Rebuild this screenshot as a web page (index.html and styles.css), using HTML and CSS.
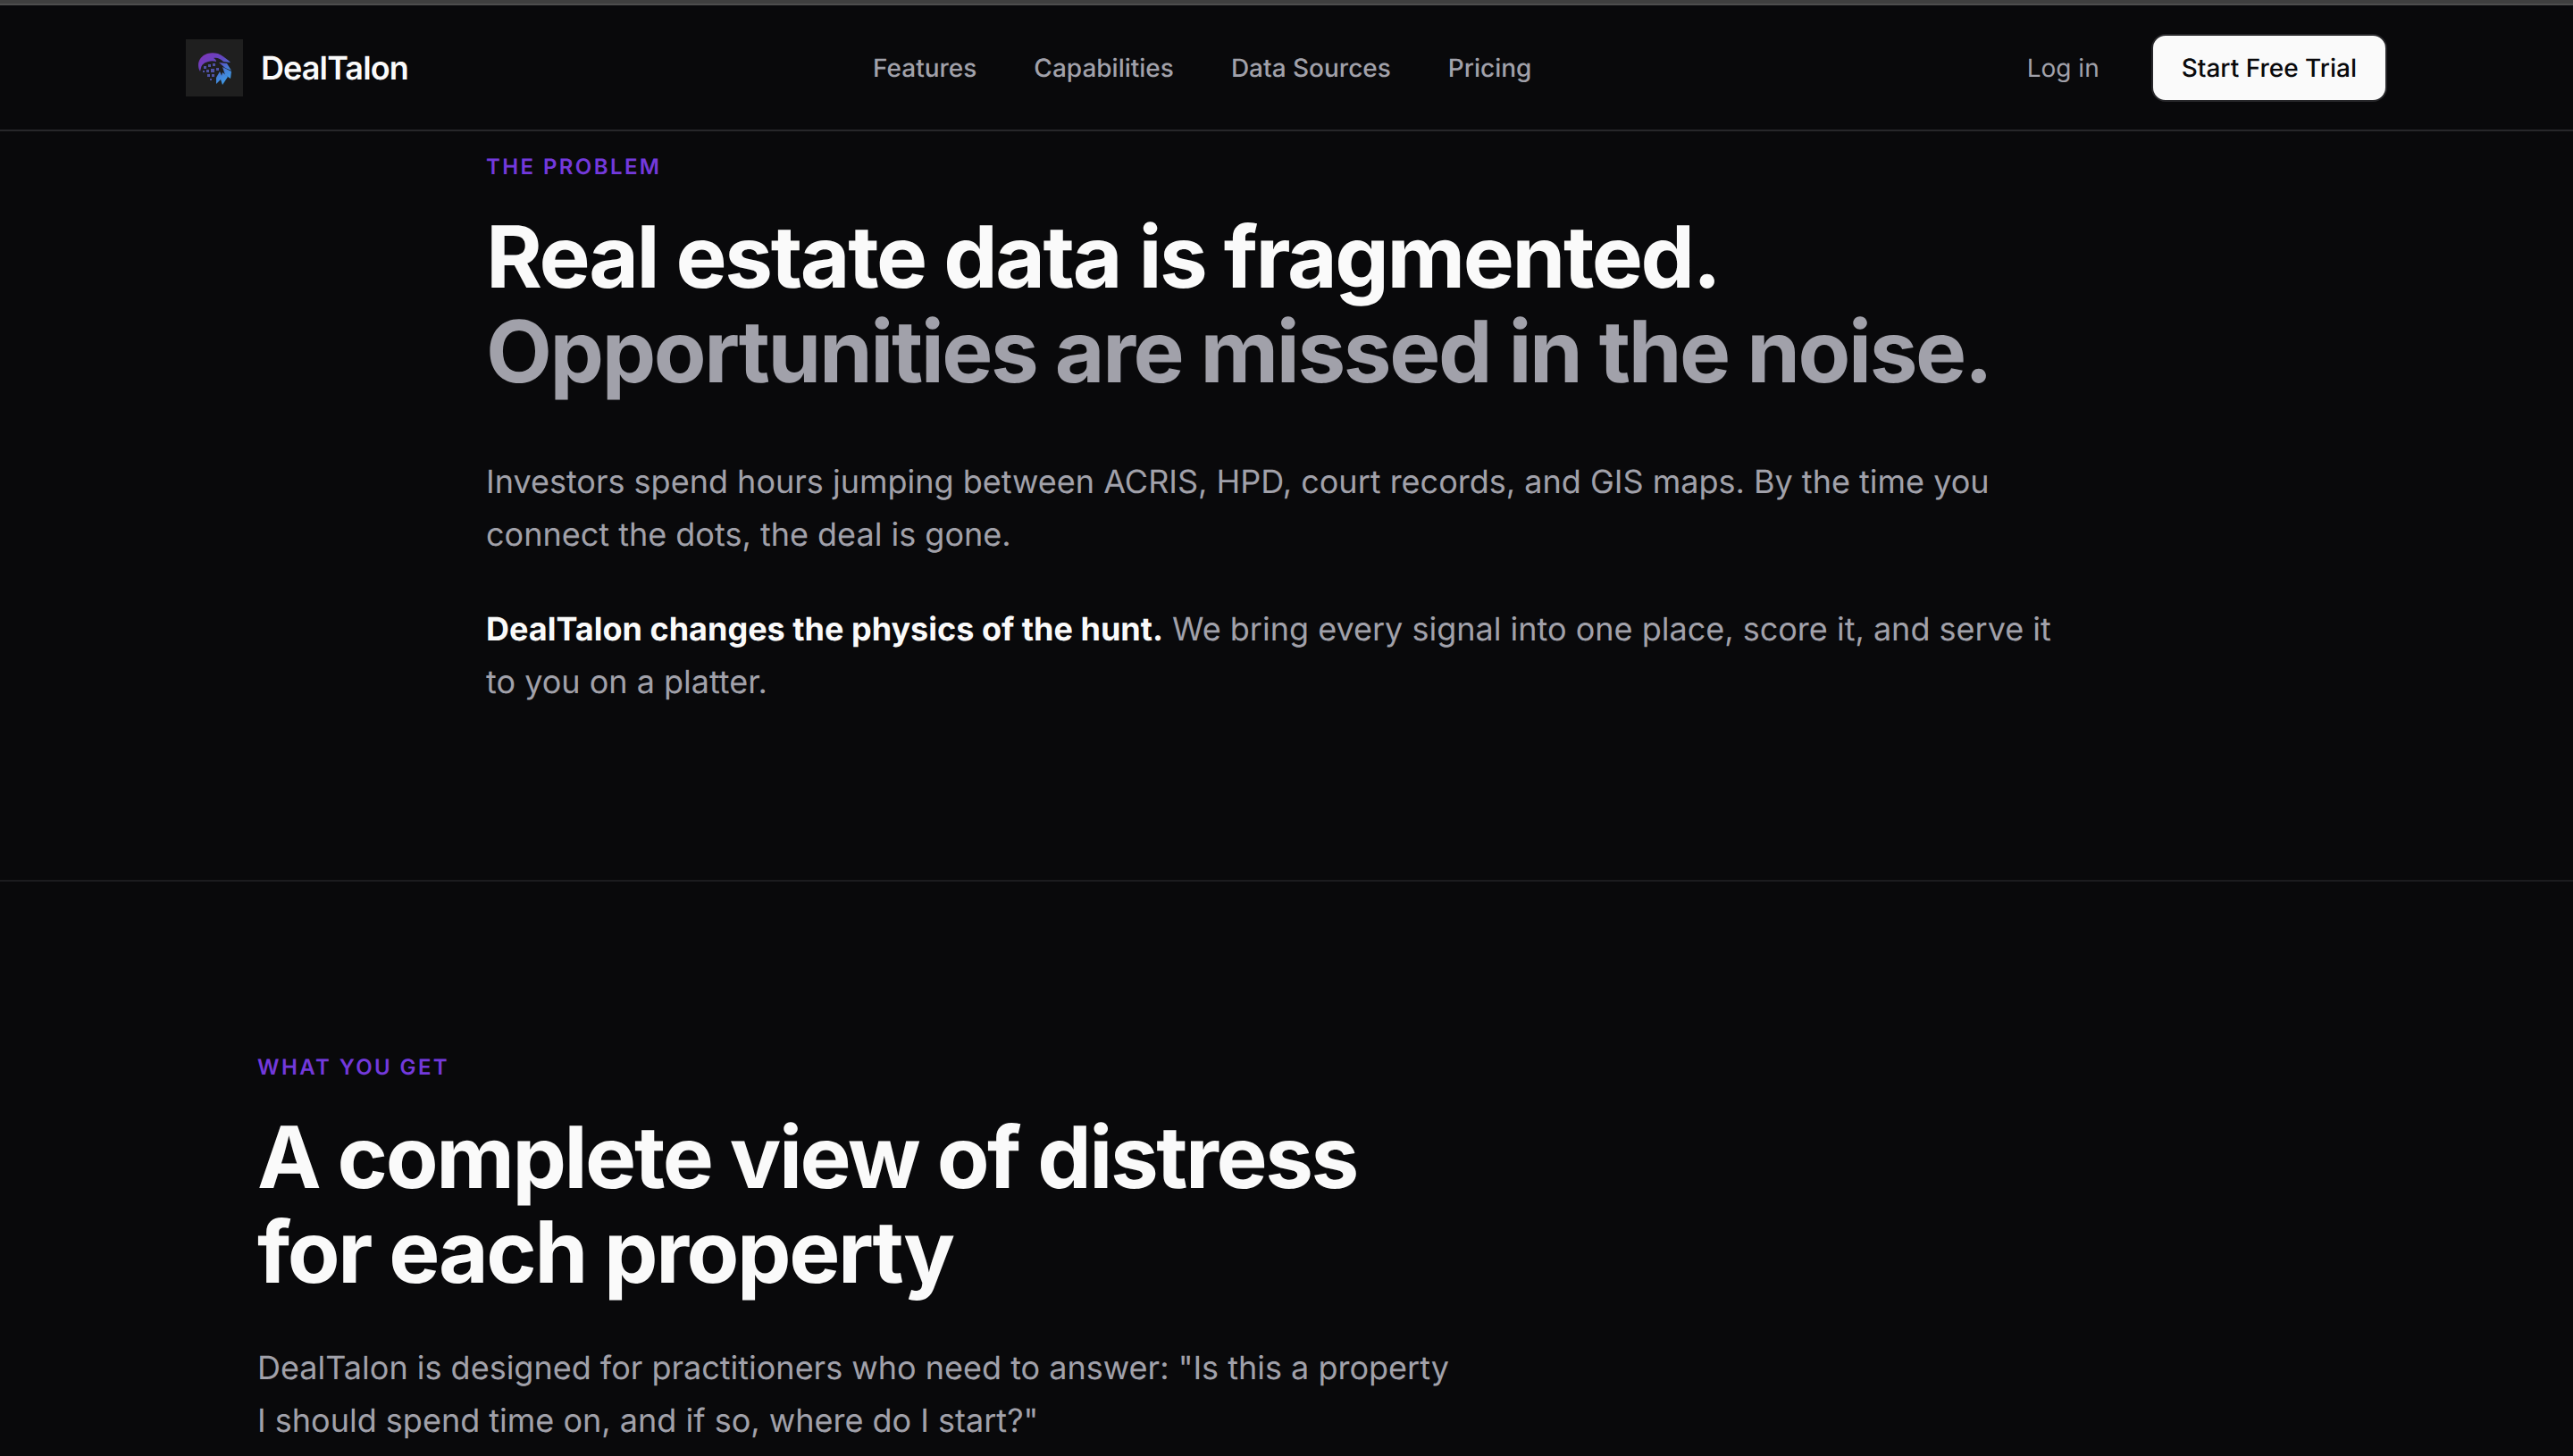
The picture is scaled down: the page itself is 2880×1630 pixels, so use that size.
FILE: index.html
```html
<!DOCTYPE html>
<html>
<head>
    <meta charset="UTF-8">
    <meta name="viewport" content="width=device-width, initial-scale=1.0">
    <title>DealTalon</title>
    <link rel="stylesheet" href="styles.css">
</head>
<body>
    <div class="top-strip"></div>

    <nav class="navbar">
        <a class="brand" href="#">
            <span class="brand-logo">
                <svg width="64" height="64" viewBox="0 0 64 64">
                    <defs>
                        <linearGradient id="talon" gradientUnits="userSpaceOnUse" x1="20" y1="16" x2="46" y2="50">
                            <stop offset="0" stop-color="#7d35b8"/>
                            <stop offset="0.4" stop-color="#6048c0"/>
                            <stop offset="0.7" stop-color="#4580d8"/>
                            <stop offset="1" stop-color="#3d9fe6"/>
                        </linearGradient>
                    </defs>
                    <g fill="url(#talon)">
                        <path d="M14 29c0-6 4-11 10-13 4-1 8-1 12 0 5 2 10 6 14 10l-8-1c-3-3-7-5-11-4 2 1 3 2 3 4-3-1-6-1-9 0-4 1-7 3-8 7l-1 4c-1-2-2-4-2-7z"/>
                        <path d="M37 26l9 1 5 8-7-3z"/>
                        <path d="M41 31l10 5-1 8-6-4z"/>
                        <path d="M41 37l6 5-6 9-2-6z"/>
                        <path d="M38 36l3 7-7 7 0-7z"/>
                    </g>
                    <g fill="#4f52a4">
                        <rect x="20" y="30" width="3" height="3"/>
                        <rect x="25" y="28" width="3" height="3"/>
                        <rect x="30" y="27" width="3" height="3"/>
                        <rect x="19" y="35" width="2" height="2"/>
                        <rect x="23" y="34" width="3" height="3"/>
                        <rect x="28" y="33" width="4" height="4"/>
                        <rect x="34" y="32" width="3" height="3"/>
                        <rect x="24" y="39" width="3" height="3"/>
                        <rect x="29" y="39" width="3" height="3"/>
                        <rect x="27" y="44" width="2" height="2"/>
                    </g>
                </svg>
            </span>
            <span class="brand-name">DealTalon</span>
        </a>
        <div class="nav-links">
            <a href="#">Features</a>
            <a href="#">Capabilities</a>
            <a href="#">Data Sources</a>
            <a href="#">Pricing</a>
        </div>
        <div class="nav-actions">
            <a class="login" href="#">Log in</a>
            <a class="trial-btn" href="#">Start Free Trial</a>
        </div>
    </nav>

    <section class="problem">
        <div class="problem-inner">
            <div class="eyebrow">THE PROBLEM</div>
            <h2>Real estate data is fragmented.<br><span class="muted">Opportunities are missed in the noise.</span></h2>
            <p class="lead">Investors spend hours jumping between ACRIS, HPD, court records, and GIS maps. By the time you connect the dots, the deal is gone.</p>
            <p class="lead"><strong>DealTalon changes the physics of the hunt.</strong> We bring every signal into one place, score it, and serve it to you on a platter.</p>
        </div>
    </section>

    <section class="features">
        <div class="eyebrow">WHAT YOU GET</div>
        <h2>A complete view of distress<br>for each property</h2>
        <p class="lead">DealTalon is designed for practitioners who need to answer: "Is this a property I should spend time on, and if so, where do I start?"</p>
    </section>
</body>
</html>
```

FILE: styles.css
```css
* {
    margin: 0;
    padding: 0;
    box-sizing: border-box;
}

html, body {
    height: 1630px;
    overflow: hidden;
}

body {
    font-family: Inter, "Liberation Sans", sans-serif;
    background: #09090b;
    color: #fafafa;
    text-rendering: geometricPrecision;
}

a {
    color: inherit;
    text-decoration: none;
}

.top-strip {
    height: 6px;
    background: #3f3f3f;
    border-bottom: 2px solid #4d4d4d;
}

.navbar {
    height: 141px;
    padding: 0 208px;
    display: flex;
    align-items: center;
    justify-content: space-between;
    border-bottom: 2px solid #27272a;
}

.brand {
    display: flex;
    align-items: center;
    gap: 20px;
}

.brand-logo {
    display: block;
    width: 64px;
    height: 64px;
    background: #1f1f1f;
}

.brand-logo svg {
    display: block;
}

.brand-name {
    font-size: 36px;
    font-weight: 600;
    letter-spacing: -0.9px;
}

.nav-links {
    display: flex;
    gap: 64px;
    font-size: 28px;
    font-weight: 500;
    color: #a1a1aa;
}

.nav-actions {
    display: flex;
    align-items: center;
    gap: 58px;
    font-size: 28px;
}

.login {
    padding-left: 34px;
    color: #a1a1aa;
}

.trial-btn {
    display: block;
    padding: 0 32px;
    height: 76px;
    line-height: 72px;
    font-weight: 500;
    background: #fafafa;
    color: #09090b;
    border: 2px solid #27272a;
    border-radius: 16px;
}

.problem {
    padding: 25px 0 193px;
    border-bottom: 2px solid #1c1c1f;
}

.problem-inner {
    width: 1792px;
    margin: 0 auto;
}

.features {
    padding: 193px 288px 0;
}

.eyebrow {
    font-size: 24px;
    font-weight: 600;
    letter-spacing: 2.4px;
    line-height: 30px;
    color: #7339dc;
}

h2 {
    margin-top: 33px;
    font-size: 96px;
    font-weight: 700;
    line-height: 106px;
    letter-spacing: -2.4px;
    color: #fafafa;
}

.muted {
    color: #a1a1aa;
}

.lead {
    margin-top: 47px;
    font-size: 36px;
    line-height: 58.5px;
    color: #a1a1aa;
}

.problem h2 + .lead {
    margin-top: 63px;
}

.problem .lead + .lead {
    margin-top: 48px;
}

.lead strong {
    font-weight: 700;
    color: #fafafa;
}

.features .lead {
    width: 1344px;
}
```
